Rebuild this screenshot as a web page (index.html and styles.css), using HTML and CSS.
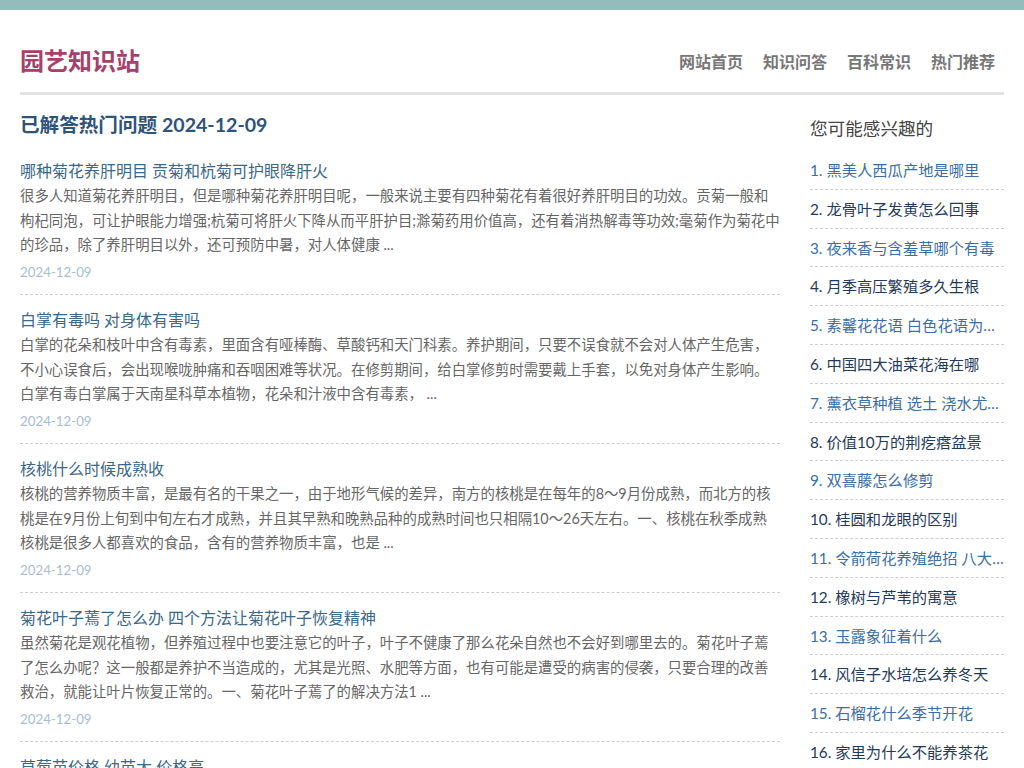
FILE: index.html
```html
<!DOCTYPE html>
<html lang="zh-CN">
<head>
<meta charset="utf-8">
<title>园艺知识站</title>
<link rel="stylesheet" href="styles.css">
</head>
<body>
<div class="topbar"></div>
<div class="wrap">
  <header class="header">
    <a class="logo" href="#">园艺知识站</a>
    <nav class="nav">
      <a href="#">网站首页</a>
      <a href="#">知识问答</a>
      <a href="#">百科常识</a>
      <a href="#">热门推荐</a>
    </nav>
  </header>
  <div class="layout">
    <main class="main">
      <h1 class="page-title">已解答热门问题 2024-12-09</h1>
      <article class="post">
        <a class="post-title" href="#">哪种菊花养肝明目 贡菊和杭菊可护眼降肝火</a>
        <p class="post-desc">很多人知道菊花养肝明目，但是哪种菊花养肝明目呢，一般来说主要有四种菊花有着很好养肝明目的功效。贡菊一般和枸杞同泡，可让护眼能力增强;杭菊可将肝火下降从而平肝护目;滁菊药用价值高，还有着消热解毒等功效;毫菊作为菊花中的珍品，除了养肝明目以外，还可预防中暑，对人体健康 ...</p>
        <div class="post-date">2024-12-09</div>
      </article>
      <article class="post">
        <a class="post-title" href="#">白掌有毒吗 对身体有害吗</a>
        <p class="post-desc">白掌的花朵和枝叶中含有毒素，里面含有哑棒酶、草酸钙和天门科素。养护期间，只要不误食就不会对人体产生危害，不小心误食后，会出现喉咙肿痛和吞咽困难等状况。在修剪期间，给白掌修剪时需要戴上手套，以免对身体产生影响。白掌有毒白掌属于天南星科草本植物，花朵和汁液中含有毒素， ...</p>
        <div class="post-date">2024-12-09</div>
      </article>
      <article class="post">
        <a class="post-title" href="#">核桃什么时候成熟收</a>
        <p class="post-desc">核桃的营养物质丰富，是最有名的干果之一，由于地形气候的差异，南方的核桃是在每年的8～9月份成熟，而北方的核桃是在9月份上旬到中旬左右才成熟，并且其早熟和晚熟品种的成熟时间也只相隔10～26天左右。一、核桃在秋季成熟核桃是很多人都喜欢的食品，含有的营养物质丰富，也是 ...</p>
        <div class="post-date">2024-12-09</div>
      </article>
      <article class="post">
        <a class="post-title" href="#">菊花叶子蔫了怎么办 四个方法让菊花叶子恢复精神</a>
        <p class="post-desc">虽然菊花是观花植物，但养殖过程中也要注意它的叶子，叶子不健康了那么花朵自然也不会好到哪里去的。菊花叶子蔫了怎么办呢？这一般都是养护不当造成的，尤其是光照、水肥等方面，也有可能是遭受的病害的侵袭，只要合理的改善救治，就能让叶片恢复正常的。一、菊花叶子蔫了的解决方法1 ...</p>
        <div class="post-date">2024-12-09</div>
      </article>
      <article class="post">
        <a class="post-title" href="#">草莓苗价格 幼苗大 价格高</a>
        <p class="post-desc">草莓苗的价格与幼苗的大小有关，幼苗越大价格越高。</p>
        <div class="post-date">2024-12-09</div>
      </article>
    </main>
    <aside class="side">
      <h2 class="side-title">您可能感兴趣的</h2>
      <ul class="side-list">
        <li class="odd"><a href="#">1. 黑美人西瓜产地是哪里</a></li>
        <li class="even"><a href="#">2. 龙骨叶子发黄怎么回事</a></li>
        <li class="odd"><a href="#">3. 夜来香与含羞草哪个有毒</a></li>
        <li class="even"><a href="#">4. 月季高压繁殖多久生根</a></li>
        <li class="odd"><a href="#">5. 素馨花花语 白色花语为纯洁</a></li>
        <li class="even"><a href="#">6. 中国四大油菜花海在哪</a></li>
        <li class="odd"><a href="#">7. 薰衣草种植 选土 浇水尤为重要</a></li>
        <li class="even"><a href="#">8. 价值10万的荆疙瘩盆景</a></li>
        <li class="odd"><a href="#">9. 双喜藤怎么修剪</a></li>
        <li class="even"><a href="#">10. 桂圆和龙眼的区别</a></li>
        <li class="odd"><a href="#">11. 令箭荷花养殖绝招 八大要点</a></li>
        <li class="even"><a href="#">12. 橡树与芦苇的寓意</a></li>
        <li class="odd"><a href="#">13. 玉露象征着什么</a></li>
        <li class="even"><a href="#">14. 风信子水培怎么养冬天</a></li>
        <li class="odd"><a href="#">15. 石榴花什么季节开花</a></li>
        <li class="even"><a href="#">16. 家里为什么不能养茶花</a></li>
      </ul>
    </aside>
  </div>
</div>
</body>
</html>
```

FILE: styles.css
```css
* { box-sizing: border-box; }
html, body { margin: 0; padding: 0; background: #fff; }
body {
  font-family: Lato, "Noto Sans CJK SC", sans-serif;
  color: #666;
}
a { text-decoration: none; color: inherit; }

.topbar { height: 10px; background: #95bcbc; }

.wrap { margin: 0 20px; }

.header {
  display: flex;
  justify-content: space-between;
  align-items: center;
  padding: 35px 0 15px;
  border-bottom: 3px solid #e3e3e3;
}
.logo {
  font-size: 24px;
  line-height: 30px;
  font-weight: bold;
  color: #a6416b;
}
.nav { display: flex; gap: 20px; padding-right: 9px; margin-top: 2px; }
.nav a {
  font-size: 16px;
  line-height: 30px;
  font-weight: bold;
  color: #777;
}

.layout { display: flex; gap: 30px; }
.main { width: 760px; flex: none; }
.side { flex: 1; min-width: 0; }

.page-title {
  margin: 15px 0 18px;
  font-size: 19.6px;
  line-height: 30px;
  font-weight: bold;
  color: #2f5379;
}

.post {
  padding: 0 0 12px;
  margin-bottom: 12px;
  border-bottom: 1px dashed #cfcfcf;
}
.post-title {
  display: block;
  font-size: 16px;
  line-height: 26px;
  color: #3b6788;
}
.post-desc {
  margin: 0;
  font-size: 14.4px;
  line-height: 24.5px;
  color: #666;
}
.post-date {
  margin-top: 4.5px;
  font-size: 13.3px;
  line-height: 20px;
  color: #a9bdd2;
}

.side-title {
  margin: 19px 0 7px;
  font-size: 17.6px;
  line-height: 30px;
  font-weight: normal;
  color: #444;
}
.side-list { list-style: none; margin: 0; padding: 0; }
.side-list li {
  padding: 7px 0 6.8px;
  border-bottom: 1px dashed #cfcfcf;
  white-space: nowrap;
  overflow: hidden;
  text-overflow: ellipsis;
  font-size: 15.3px;
  line-height: 24px;
}
.side-list li.odd { color: #3a6ea6; }
.side-list li.even { color: #1f3a5a; }
```
